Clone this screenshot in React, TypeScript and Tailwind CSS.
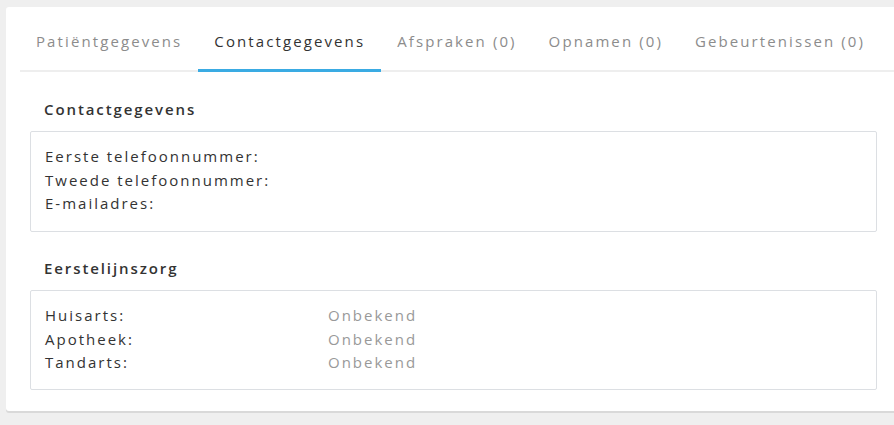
import React from "react";

const tabs = [
  { label: "Patiëntgegevens", active: false },
  { label: "Contactgegevens", active: true },
  { label: "Afspraken (0)", active: false },
  { label: "Opnamen (0)", active: false },
  { label: "Gebeurtenissen (0)", active: false },
];

export default function App() {
  return (
    <div
      className="w-[894px] h-[425px] bg-[#efefef] overflow-hidden pt-[7px] pl-[6px]"
      style={{ fontFamily: '"Open Sans", "Liberation Sans", sans-serif' }}
    >
      <div className="bg-white rounded-[3px] shadow-[0_2px_0_#d9d9d9] h-[404px] w-[900px] pl-[14px] pt-[13px]">
        <div className="flex border-b-2 border-[#eeeeee] h-[52px]">
          {tabs.map((t) => (
            <div
              key={t.label}
              className={
                "px-[16px] pt-[10px] text-[15px] leading-[22px] tracking-[2.1px] " +
                (t.active
                  ? "text-[#333333] border-b-[3px] border-[#3aabe3] mb-[-2px]"
                  : "text-[#8c8c8c]")
              }
            >
              {t.label}
            </div>
          ))}
        </div>
        <div className="pl-[10px] pr-[29px]">
          <div className="pl-[14px] pt-[27px] pb-[12px] text-[15px] font-semibold text-[#333333] tracking-[1.9px] leading-[20px]">
            Contactgegevens
          </div>
          <div className="border border-[#dcdfe3] rounded-[2px] h-[101px] pl-[14px] pt-[13px] text-[15px] text-[#333333] tracking-[2px] leading-[23.5px]">
            <div>Eerste telefoonnummer:</div>
            <div>Tweede telefoonnummer:</div>
            <div>E-mailadres:</div>
          </div>
          <div className="pl-[14px] pt-[26px] pb-[12px] text-[15px] font-semibold text-[#333333] tracking-[1.9px] leading-[20px]">
            Eerstelijnszorg
          </div>
          <div className="border border-[#dcdfe3] rounded-[2px] h-[100px] pl-[14px] pt-[13px] text-[15px] tracking-[2px] leading-[23.5px]">
            {[
              ["Huisarts:", "Onbekend"],
              ["Apotheek:", "Onbekend"],
              ["Tandarts:", "Onbekend"],
            ].map(([k, v]) => (
              <div key={k} className="flex">
                <div className="w-[283px] text-[#333333]">{k}</div>
                <div className="text-[#999999]">{v}</div>
              </div>
            ))}
          </div>
        </div>
      </div>
    </div>
  );
}
